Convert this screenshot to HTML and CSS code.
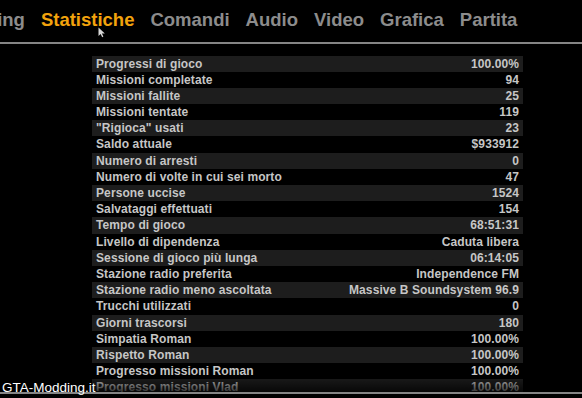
FILE: index.html
```html
<!DOCTYPE HTML>
<html>
<head>
    <title>Statistiche</title>
    <meta charset="utf-8" />
    <meta name="viewport" content="width=device-width, initial-scale=1" />
    <link rel="stylesheet" href="styles.css">
</head>
<body>
    <div id="screen">
        <nav id="menu-tabs">
            <span class="tab">Briefing</span>
            <span class="tab active">Statistiche</span>
            <span class="tab">Comandi</span>
            <span class="tab">Audio</span>
            <span class="tab">Video</span>
            <span class="tab">Grafica</span>
            <span class="tab">Partita</span>
        </nav>

        <svg class="cursor" width="8" height="11" viewBox="0 0 8 11">
            <path d="M0.5 0.5 L0.5 9 L2.6 7 L4.2 10.2 L5.4 9.6 L3.9 6.5 L6.8 6.5 Z" fill="#d8d8d8" />
        </svg>

        <div id="stats-view">
            <div class="stats-list">
                <div class="stat-row"><span>Progressi di gioco</span><span>100.00%</span></div>
                <div class="stat-row"><span>Missioni completate</span><span>94</span></div>
                <div class="stat-row"><span>Missioni fallite</span><span>25</span></div>
                <div class="stat-row"><span>Missioni tentate</span><span>119</span></div>
                <div class="stat-row"><span>"Rigioca" usati</span><span>23</span></div>
                <div class="stat-row"><span>Saldo attuale</span><span>$933912</span></div>
                <div class="stat-row"><span>Numero di arresti</span><span>0</span></div>
                <div class="stat-row"><span>Numero di volte in cui sei morto</span><span>47</span></div>
                <div class="stat-row"><span>Persone uccise</span><span>1524</span></div>
                <div class="stat-row"><span>Salvataggi effettuati</span><span>154</span></div>
                <div class="stat-row"><span>Tempo di gioco</span><span>68:51:31</span></div>
                <div class="stat-row"><span>Livello di dipendenza</span><span>Caduta libera</span></div>
                <div class="stat-row"><span>Sessione di gioco più lunga</span><span>06:14:05</span></div>
                <div class="stat-row"><span>Stazione radio preferita</span><span>Independence FM</span></div>
                <div class="stat-row"><span>Stazione radio meno ascoltata</span><span>Massive B Soundsystem 96.9</span></div>
                <div class="stat-row"><span>Trucchi utilizzati</span><span>0</span></div>
                <div class="stat-row"><span>Giorni trascorsi</span><span>180</span></div>
                <div class="stat-row"><span>Simpatia Roman</span><span>100.00%</span></div>
                <div class="stat-row"><span>Rispetto Roman</span><span>100.00%</span></div>
                <div class="stat-row"><span>Progresso missioni Roman</span><span>100.00%</span></div>
                <div class="stat-row"><span>Progresso missioni Vlad</span><span>100.00%</span></div>
                <div class="stat-row"><span>Progresso missioni Jacob</span><span>100.00%</span></div>
            </div>
        </div>

        <div id="footer-bar"></div>

        <div class="watermark">GTA-Modding.it</div>
    </div>
</body>
</html>
```

FILE: styles.css
```css
/* Base */
html, body { margin: 0; padding: 0; }
*, *:before, *:after { box-sizing: border-box; }

body {
    background-color: #000000;
    color: #c6c6c6;
    font-family: "Liberation Sans", Arial, sans-serif;
    font-weight: 700;
    overflow: hidden;
}

#screen {
    position: relative;
    width: 582px;
    height: 398px;
    overflow: hidden;
    display: flex;
    flex-direction: column;
}

/* Tabs */
#menu-tabs {
    display: flex;
    gap: 16px;
    height: 44px;
    padding-top: 9px;
    margin-left: -45px;
    border-bottom: 2px solid #858585;
    white-space: nowrap;
    font-size: 18.5px;
    line-height: 22px;
    color: #8c8c8c;
    flex-shrink: 0;
}

#menu-tabs .active {
    color: #f2a30d;
}

.cursor {
    position: absolute;
    left: 98px;
    top: 27px;
}

/* Stats list */
#stats-view {
    position: relative;
    height: 348px;
    overflow: hidden;
    flex-shrink: 0;
}

#stats-view:after {
    content: '';
    position: absolute;
    left: 0;
    right: 0;
    bottom: 0;
    height: 14px;
    background-image: linear-gradient(to bottom, rgba(0, 0, 0, 0.1), rgba(0, 0, 0, 0.75));
}

.stats-list {
    width: 431px;
    margin-left: 92px;
    padding-top: 11.5px;
}

.stat-row {
    display: flex;
    justify-content: space-between;
    height: 16.2px;
    line-height: 16.2px;
    padding: 0 4px;
    font-size: 12px;
    letter-spacing: 0.1px;
}

.stat-row:nth-child(odd) {
    background-color: #1d1d1d;
}

#footer-bar {
    height: 2px;
    background-color: #858585;
    flex-shrink: 0;
}

.watermark {
    position: absolute;
    left: 2px;
    top: 380px;
    font-weight: 400;
    font-size: 13.5px;
    line-height: 16px;
    color: #ffffff;
}
```
